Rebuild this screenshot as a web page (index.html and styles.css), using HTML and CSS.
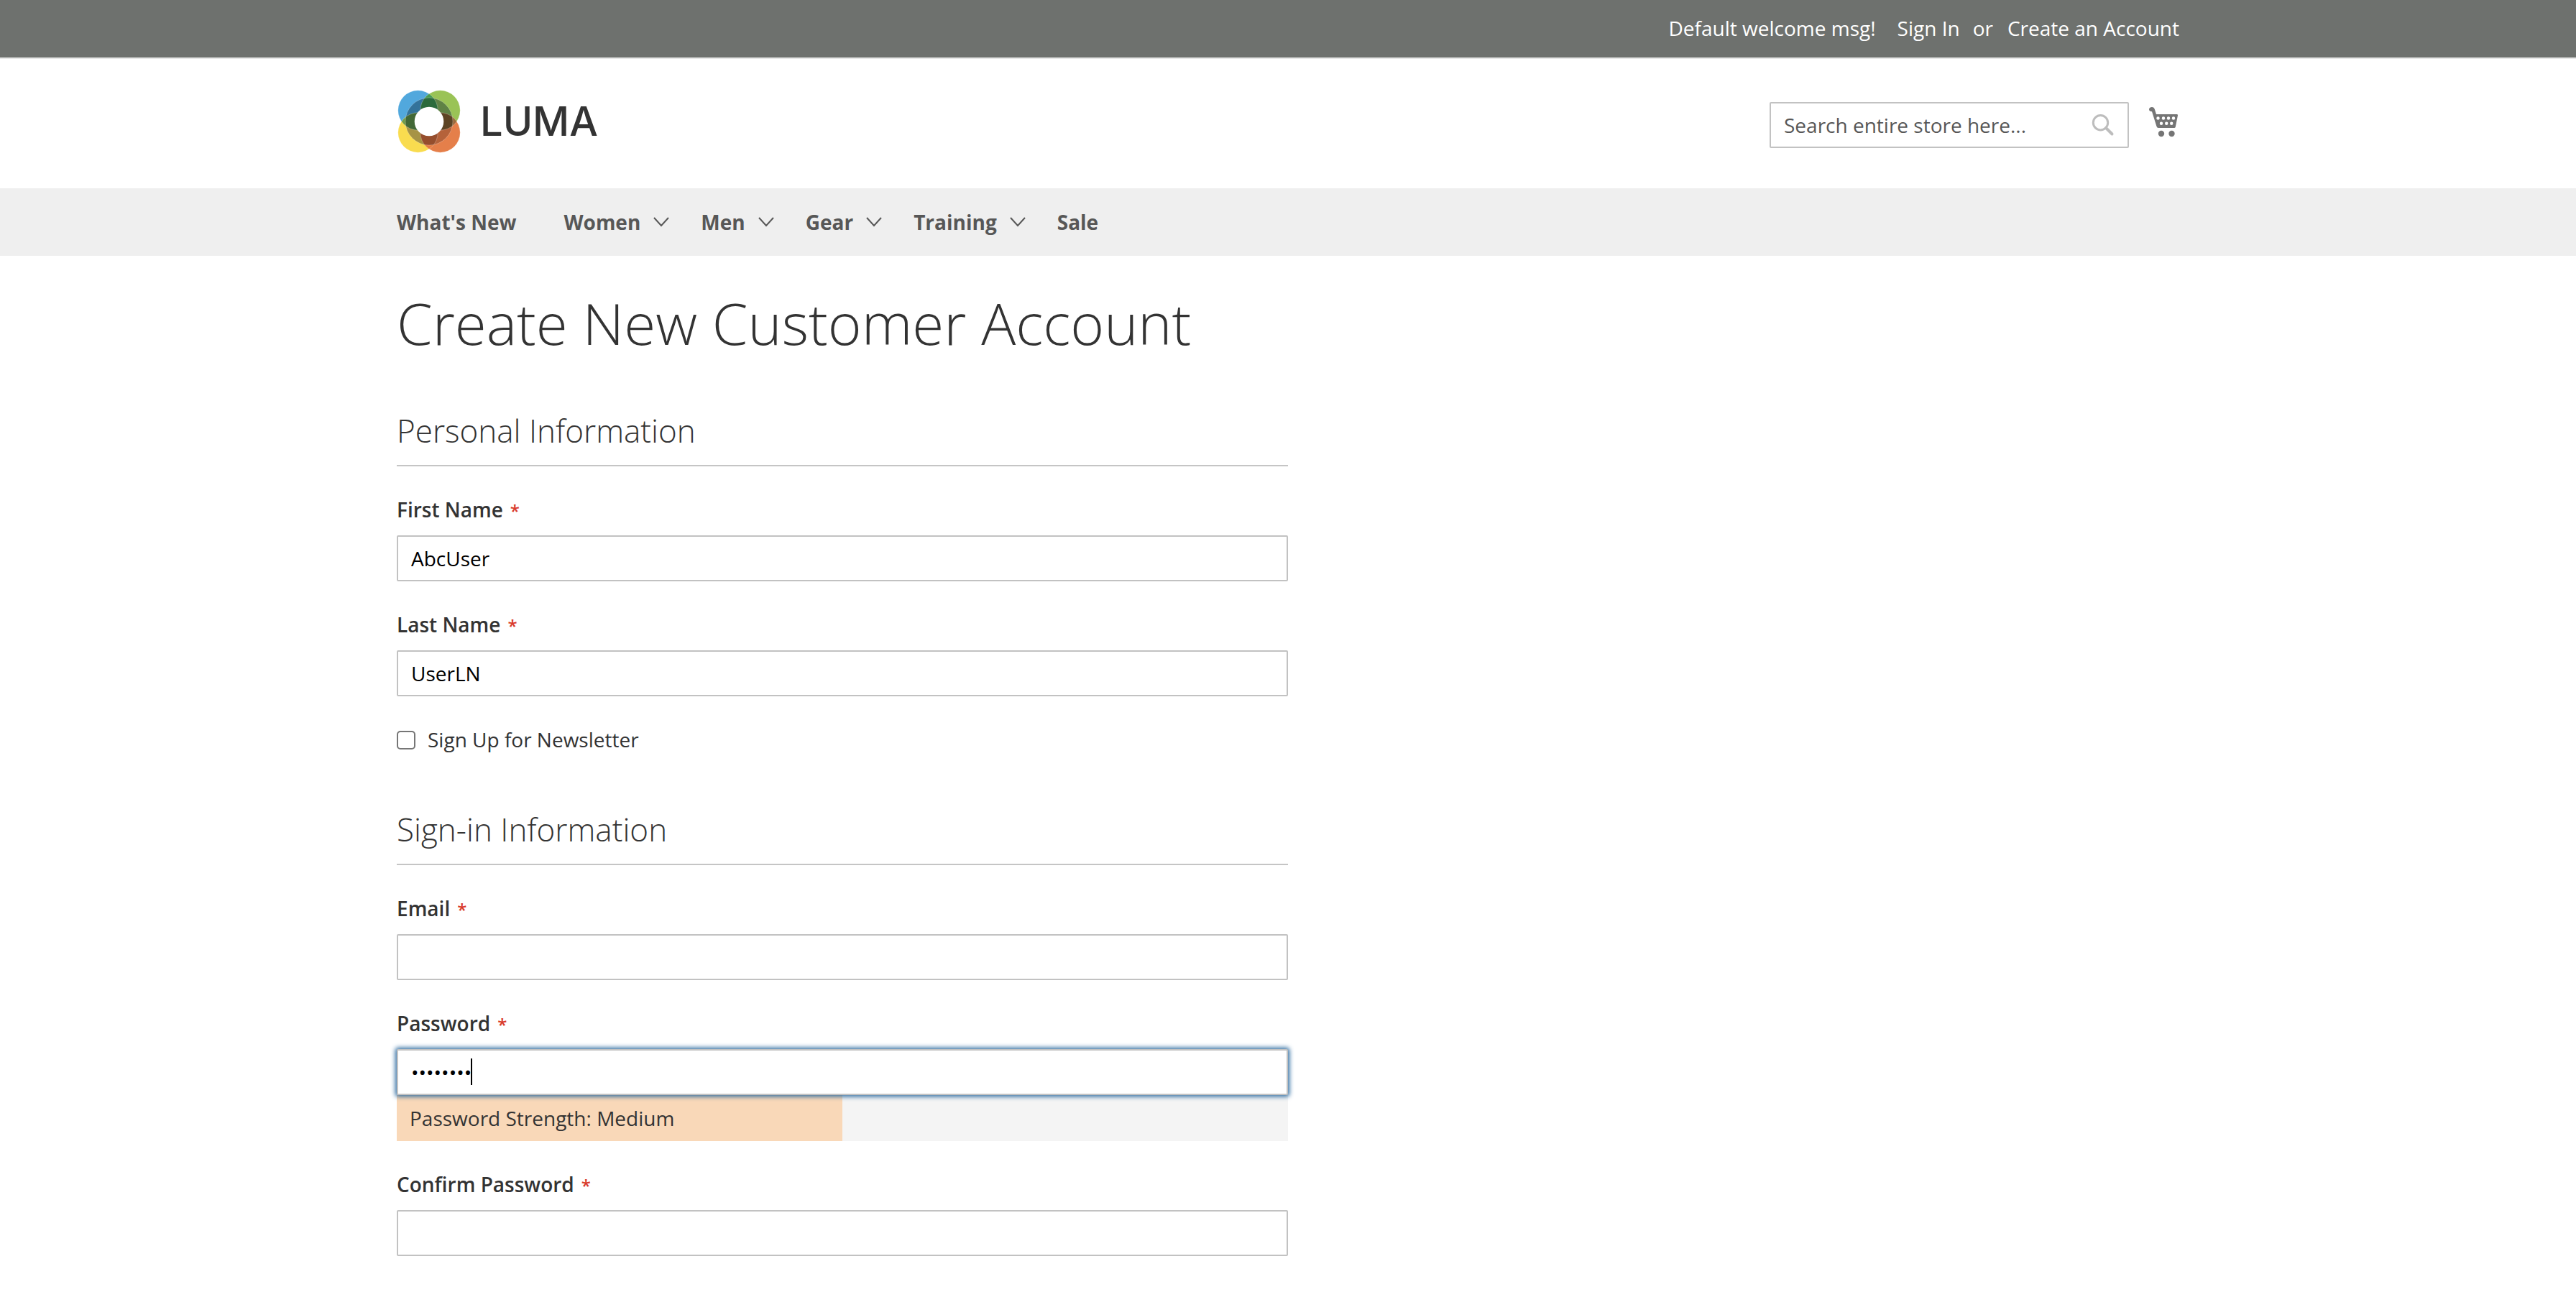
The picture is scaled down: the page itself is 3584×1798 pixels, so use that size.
FILE: index.html
```html
<!DOCTYPE html>
<html lang="en">
<head>
<meta charset="utf-8">
<meta name="viewport" content="width=device-width, initial-scale=1">
<title>Create New Customer Account</title>
<link rel="stylesheet" href="styles.css">
</head>
<body>
<header>
  <div class="panel">
    <div class="container panel-links">
      <span>Default welcome msg!</span>
      <a class="sign-in" href="#">Sign In</a>
      <span class="or">or</span>
      <a href="#">Create an Account</a>
    </div>
  </div>
  <div class="container masthead">
    <a class="logo" href="#" aria-label="Luma">
      <svg class="logo-mark" viewBox="0 0 90 90" aria-hidden="true">
        <defs>
          <clipPath id="tl"><circle cx="29.500" cy="29.500" r="27.700"/></clipPath>
          <clipPath id="tr"><circle cx="60.500" cy="29.500" r="27.700"/></clipPath>
          <clipPath id="bl"><circle cx="29.500" cy="60.500" r="27.700"/></clipPath>
          <clipPath id="br"><circle cx="60.500" cy="60.500" r="27.700"/></clipPath>
        </defs>
        <circle cx="29.500" cy="29.500" r="27.700" fill="#51a8dd"/>
        <circle cx="60.500" cy="29.500" r="27.700" fill="#9ac356"/>
        <circle cx="29.500" cy="60.500" r="27.700" fill="#f9dc4f"/>
        <circle cx="60.500" cy="60.500" r="27.700" fill="#e57f4a"/>
        <circle clip-path="url(#tl)" cx="60.500" cy="29.500" r="27.700" fill="#459a52"/>
        <circle clip-path="url(#tl)" cx="29.500" cy="60.500" r="27.700" fill="#6f9b4a"/>
        <circle clip-path="url(#tr)" cx="60.500" cy="60.500" r="27.700" fill="#9a6a3c"/>
        <circle clip-path="url(#bl)" cx="60.500" cy="60.500" r="27.700" fill="#e37b40"/>
        <circle clip-path="url(#tl)" cx="45" cy="45" r="33" fill="#33739a"/>
        <circle clip-path="url(#tr)" cx="45" cy="45" r="33" fill="#5f8245"/>
        <circle clip-path="url(#bl)" cx="45" cy="45" r="33" fill="#a69345"/>
        <circle clip-path="url(#br)" cx="45" cy="45" r="33" fill="#b5623a"/>
        <g clip-path="url(#tl)">
          <g clip-path="url(#tr)"><circle cx="45" cy="45" r="33" fill="#2b6a3c"/></g>
          <g clip-path="url(#bl)"><circle cx="45" cy="45" r="33" fill="#426837"/></g>
        </g>
        <g clip-path="url(#br)">
          <g clip-path="url(#tr)"><circle cx="45" cy="45" r="33" fill="#5d4424"/></g>
          <g clip-path="url(#bl)"><circle cx="45" cy="45" r="33" fill="#964e2d"/></g>
        </g>
        <g fill="none" stroke="#fff" stroke-opacity=".35" stroke-width=".7">
          <circle cx="29.500" cy="29.500" r="27.700"/><circle cx="60.500" cy="29.500" r="27.700"/>
          <circle cx="29.500" cy="60.500" r="27.700"/><circle cx="60.500" cy="60.500" r="27.700"/>
          <circle cx="45" cy="45" r="33"/>
        </g>
        <circle cx="45" cy="45" r="20.300" fill="#fff"/>
      </svg>
      <span class="logo-name">LUMA</span>
    </a>
    <form class="search" role="search">
      <input class="control" type="text" aria-label="Search" placeholder="Search entire store here...">
      <button class="search-button" type="button" aria-label="Search">
        <svg viewBox="0 0 32 32" aria-hidden="true"><g fill="none" stroke="#bdbdbd" stroke-width="3" stroke-linecap="round"><circle cx="12.500" cy="12.700" r="10.200"/><path stroke-width="4" d="M20.500 20.500L28.500 28.500"/></g></svg>
      </button>
    </form>
    <a class="cart" href="#" aria-label="My Cart">
      <svg viewBox="0 0 42 42" aria-hidden="true">
        <path fill="#757575" d="M4 0C1.500 0 0 1.500 0 3.300S1.500 6.300 4 6.300L10.500 27Q11 29 13 29H35Q36.500 29 36.800 27.500L40 11.500Q40.300 10 38.800 10H10L7.800 3Q6.800 0 4 0Z"/>
        <g fill="#fff"><circle cx="12.500" cy="15.500" r="2.200"/><circle cx="20" cy="15.500" r="2.200"/><circle cx="27" cy="15.500" r="2.200"/><circle cx="34" cy="15.500" r="2.200"/><circle cx="17" cy="22.800" r="2.200"/><circle cx="24.200" cy="22.800" r="2.200"/><circle cx="31.200" cy="22.800" r="2.200"/></g>
        <circle cx="17" cy="37" r="4.200" fill="#757575"/><circle cx="31.500" cy="37" r="4.200" fill="#757575"/>
      </svg>
    </a>
  </div>
  <nav class="nav" aria-label="Main">
    <ul class="container menu">
      <li class="plain"><a href="#">What's New</a></li>
      <li><a href="#">Women<svg class="chevron" viewBox="0 0 22 14" aria-hidden="true"><path d="M1 1L11 12L21 1"/></svg></a></li>
      <li><a href="#">Men<svg class="chevron" viewBox="0 0 22 14" aria-hidden="true"><path d="M1 1L11 12L21 1"/></svg></a></li>
      <li><a href="#">Gear<svg class="chevron" viewBox="0 0 22 14" aria-hidden="true"><path d="M1 1L11 12L21 1"/></svg></a></li>
      <li><a href="#">Training<svg class="chevron" viewBox="0 0 22 14" aria-hidden="true"><path d="M1 1L11 12L21 1"/></svg></a></li>
      <li><a href="#">Sale</a></li>
    </ul>
  </nav>
</header>
<main class="container content">
  <h1>Create New Customer Account</h1>
  <form class="account">
    <section class="group" aria-labelledby="personal">
      <h2 id="personal">Personal Information</h2>
      <div class="field">
        <label class="required" for="firstname">First Name</label>
        <input class="control" id="firstname" type="text" value="AbcUser">
      </div>
      <div class="field">
        <label class="required" for="lastname">Last Name</label>
        <input class="control" id="lastname" type="text" value="UserLN">
      </div>
      <div class="choice">
        <input class="checkbox" id="newsletter" type="checkbox">
        <label for="newsletter">Sign Up for Newsletter</label>
      </div>
    </section>
    <section class="group" aria-labelledby="signin">
      <h2 id="signin">Sign-in Information</h2>
      <div class="field">
        <label class="required" for="email">Email</label>
        <input class="control" id="email" type="email">
      </div>
      <div class="field">
        <label class="required" for="password">Password</label>
        <div class="password-box">
          <input class="control active" id="password" type="password" value="abcd1234">
          <span class="caret"></span>
        </div>
        <div class="strength"><div class="strength-level">Password Strength: Medium</div></div>
      </div>
      <div class="field">
        <label class="required" for="confirm">Confirm Password</label>
        <input class="control" id="confirm" type="password">
      </div>
    </section>
  </form>
</main>
</body>
</html>
```
FILE: styles.css
```css
* { box-sizing: border-box; }

body {
  margin: 0;
  background: #fff;
  color: #333;
  font-family: "Open Sans", "Noto Sans", sans-serif;
  font-size: 28px;
  line-height: 40px;
}

a { color: inherit; text-decoration: none; }
svg { display: block; }

.container {
  max-width: 2560px;
  margin: 0 auto;
  padding: 0 40px;
}

/* Header */
.panel {
  padding: 19px 0 21px;
  border-bottom: 2px solid #e8e8e8;
  background: #6e716e;
  background-clip: padding-box;
  color: #fff;
}

.panel-links {
  display: flex;
  justify-content: flex-end;
}

.sign-in { margin-left: 30px; }
.or { margin: 0 20px 0 18px; }

.masthead {
  display: flex;
  align-items: center;
  height: 180px;
}

.logo {
  display: flex;
  align-items: center;
  gap: 26px;
  margin: 0 auto 6px 0;
}

.logo-mark { width: 90px; height: 90px; }

.logo-name {
  font-family: Inter, sans-serif;
  font-size: 56px;
  font-weight: 500;
}

.search {
  position: relative;
  width: 500px;
  margin: 4px 28px 0 0;
}

.search .control { padding-right: 70px; }
.search .control::placeholder { color: #575757; opacity: 1; }

.search-button {
  position: absolute;
  top: 16px;
  right: 18px;
  width: 34px;
  height: 32px;
  padding: 0;
  border: 0;
  background: none;
}

.search-button svg { width: 32px; height: 32px; }

.cart { margin-bottom: 4px; }
.cart svg { width: 42px; height: 42px; }

.nav { background: #efefef; }

.menu {
  display: flex;
  gap: 44px;
  list-style: none;
  color: #575757;
  font-weight: 700;
  line-height: 94px;
}

.menu a { display: flex; align-items: center; gap: 18px; }
.plain { padding-right: 22px; }

.chevron {
  width: 22px;
  height: 14px;
  fill: none;
  stroke: #575757;
  stroke-width: 2;
}

/* Account form */
.content { padding-top: 48px; padding-bottom: 48px; }

h1 {
  margin: 0 0 80px;
  font-size: 80px;
  font-weight: 300;
  line-height: 90px;
}

.account { width: 50%; }
.group { margin-bottom: 80px; }

h2 {
  margin: 0 0 40px;
  padding-bottom: 22px;
  border-bottom: 2px solid #c5c5c5;
  font-size: 44px;
  font-weight: 300;
  line-height: 51px;
}

.field { margin-bottom: 40px; }

.field label {
  display: block;
  margin-bottom: 16px;
  font-weight: 600;
}

.required::after {
  content: "*";
  margin-left: 10px;
  color: #d93a2b;
  font-size: 24px;
  line-height: 1;
}

.control {
  display: block;
  width: 100%;
  height: 64px;
  padding: 0 18px;
  border: 2px solid #c2c2c2;
  border-radius: 2px;
  background: #fff;
  color: #000;
  font: inherit;
  line-height: 40px;
}

.control.active {
  box-shadow: 0 0 6px 2px #2a699f;
}

.control:focus { outline: 0; }

.password-box { position: relative; }

.caret {
  position: absolute;
  top: 13px;
  left: 103px;
  width: 2px;
  height: 37px;
  background: #000;
}

.strength { background: #f4f4f4; }

.strength-level {
  width: 50%;
  padding: 12px 18px;
  background: #f9d8b8;
}

.choice {
  display: flex;
  align-items: center;
  gap: 17px;
}

.checkbox {
  appearance: none;
  width: 26px;
  height: 26px;
  margin: 2px 0 0;
  border: 2px solid #767676;
  border-radius: 5px;
  background: #fff;
}
```
